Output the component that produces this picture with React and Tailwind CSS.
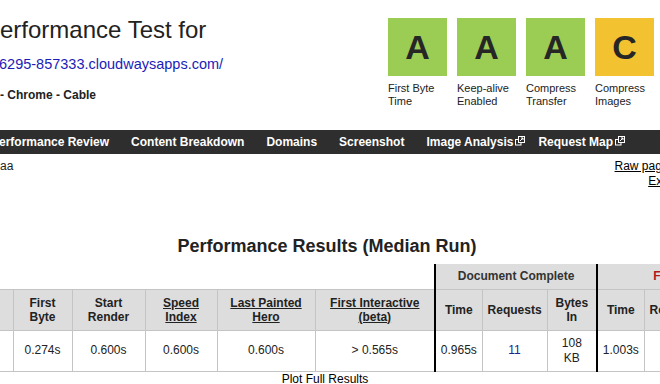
import React from "react";

const ExtIcon = () => (
  <svg width="10" height="10" viewBox="0 0 10 10" className="ml-[2px] mt-[-3px] shrink-0">
    <rect x="0.5" y="3.5" width="5.5" height="5.5" fill="none" stroke="white" strokeWidth="1" />
    <rect x="3.5" y="0.5" width="6" height="6" fill="#2e2e2e" stroke="white" strokeWidth="1" />
    <path d="M5 5 L8 2 M6 2 H8 V4" stroke="white" strokeWidth="1" fill="none" />
  </svg>
);

const Grade = ({ letter, color, label }) => (
  <div className="w-[59px] shrink-0">
    <div
      className={`h-[58px] w-[59px] flex items-center justify-center text-[34px] font-bold text-[#262626] ${color}`}
    >
      {letter}
    </div>
    <div className="mt-[6px] text-[11px] leading-[13px] text-[#222]">{label}</div>
  </div>
);

const th = "border border-[#c4c4c4] bg-[#dddddd] text-[12px] leading-[14px] font-bold text-[#222] text-center align-middle p-0";
const td = "border border-[#c4c4c4] bg-white text-[12px] leading-[15px] text-[#222] text-center align-middle p-0";

export default function App() {
  return (
    <div className="w-[660px] h-[384px] overflow-hidden bg-white font-['Liberation_Sans',Arial,sans-serif] text-[#222]">
      {/* Header */}
      <div className="flex h-[130px]">
        <div className="w-[388px] shrink-0 whitespace-nowrap">
          <div className="pt-[16px] -ml-[16px] text-[24px] leading-[28px] text-[#222]">Performance Test for</div>
          <div className="mt-[11px] -ml-[1px] text-[14.5px] leading-[18px] text-[#1c1cb8]">6295-857333.cloudwaysapps.com/</div>
          <div className="mt-[15px] text-[12px] leading-[15px] font-bold text-[#222]">- Chrome - Cable</div>
        </div>
        <div className="flex gap-[10px] pt-[18px]">
          <Grade letter="A" color="bg-[#9bcd55]" label="First Byte Time" />
          <Grade letter="A" color="bg-[#9bcd55]" label="Keep-alive Enabled" />
          <Grade letter="A" color="bg-[#9bcd55]" label="Compress Transfer" />
          <Grade letter="C" color="bg-[#f2c230]" label="Compress Images" />
        </div>
      </div>

      {/* Nav */}
      <div className="h-[24px] bg-[#2e2e2e] flex whitespace-nowrap text-white text-[12px] font-bold leading-[24px]">
        <div className="flex -ml-[20px]">
          <div className="px-[11px]">Performance Review</div>
          <div className="px-[11px]">Content Breakdown</div>
          <div className="px-[11px]">Domains</div>
          <div className="px-[11px]">Screenshot</div>
          <div className="pl-[11px] pr-[2px] flex items-center">
            <span>Image Analysis</span>
            <ExtIcon />
          </div>
          <div className="pl-[11px] pr-[2px] flex items-center">
            <span>Request Map</span>
            <ExtIcon />
          </div>
        </div>
      </div>

      {/* Links row */}
      <div className="mt-[5px] w-[792px] flex justify-between text-[12px] leading-[15px] whitespace-nowrap">
        <div className="text-[#222]">aa</div>
        <div className="text-right text-black">
          <div>
            <span className="underline">Raw page data</span> - <span className="underline">Raw object data</span>
          </div>
          <div>
            <span className="underline">Export HTTP Archive (.har)</span>
          </div>
        </div>
      </div>

      {/* Results title */}
      <div className="mt-[46px] w-[654px] text-center text-[18px] leading-[22px] font-bold text-[#222] whitespace-nowrap">
        Performance Results (Median Run)
      </div>

      {/* Table */}
      <table className="mt-[7px] table-fixed border-collapse w-[783px]">
        <colgroup>
          <col className="w-[13px]" />
          <col className="w-[59px]" />
          <col className="w-[73px]" />
          <col className="w-[72px]" />
          <col className="w-[98px]" />
          <col className="w-[120px]" />
          <col className="w-[47px]" />
          <col className="w-[65px]" />
          <col className="w-[50px]" />
          <col className="w-[47px]" />
          <col className="w-[65px]" />
          <col className="w-[50px]" />
          <col className="w-[24px]" />
        </colgroup>
        <thead>
          <tr className="h-[25px]">
            <th colSpan={6} className="border-b border-[#c4c4c4] p-0 bg-white"></th>
            <th colSpan={3} className="border border-[#c4c4c4] border-t-0 border-l-2 border-l-black bg-[#dddddd] text-[12px] leading-[16px] font-bold text-[#333] text-center p-0 whitespace-nowrap">
              Document Complete
            </th>
            <th colSpan={4} className="border border-[#c4c4c4] border-t-0 border-l-2 border-l-black bg-[#dddddd] text-[12px] leading-[16px] font-bold text-[#b01818] text-center p-0 whitespace-nowrap">
              Fully Loaded
            </th>
          </tr>
          <tr className="h-[41px]">
            <th className={`${th} border-l-0`}></th>
            <th className={th}>First<br />Byte</th>
            <th className={th}>Start<br />Render</th>
            <th className={th}><span className="underline">Speed<br />Index</span></th>
            <th className={th}><span className="underline">Last Painted<br />Hero</span></th>
            <th className={th}><span className="underline">First Interactive<br />(beta)</span></th>
            <th className={`${th} border-l-2 border-l-black`}>Time</th>
            <th className={th}>Requests</th>
            <th className={th}>Bytes<br />In</th>
            <th className={`${th} border-l-2 border-l-black`}>Time</th>
            <th className={th}>Requests</th>
            <th className={th}>Bytes<br />In</th>
            <th className={th}>Cost</th>
          </tr>
        </thead>
        <tbody>
          <tr className="h-[41px]">
            <td className={`${td} border-l-0`}></td>
            <td className={td}>0.274s</td>
            <td className={td}>0.600s</td>
            <td className={td}>0.600s</td>
            <td className={td}>0.600s</td>
            <td className={td}>&gt; 0.565s</td>
            <td className={`${td} border-l-2 border-l-black`}>0.965s</td>
            <td className={`${td} text-[#22228a]`}>11</td>
            <td className={td}>108<br />KB</td>
            <td className={`${td} border-l-2 border-l-black`}>1.003s</td>
            <td className={`${td} text-[#22228a]`}>12</td>
            <td className={td}>110<br />KB</td>
            <td className={td}></td>
          </tr>
        </tbody>
      </table>

      <div className="w-[650px] text-center text-[12px] leading-[15px] text-black whitespace-nowrap">
        Plot Full Results
      </div>
    </div>
  );
}
